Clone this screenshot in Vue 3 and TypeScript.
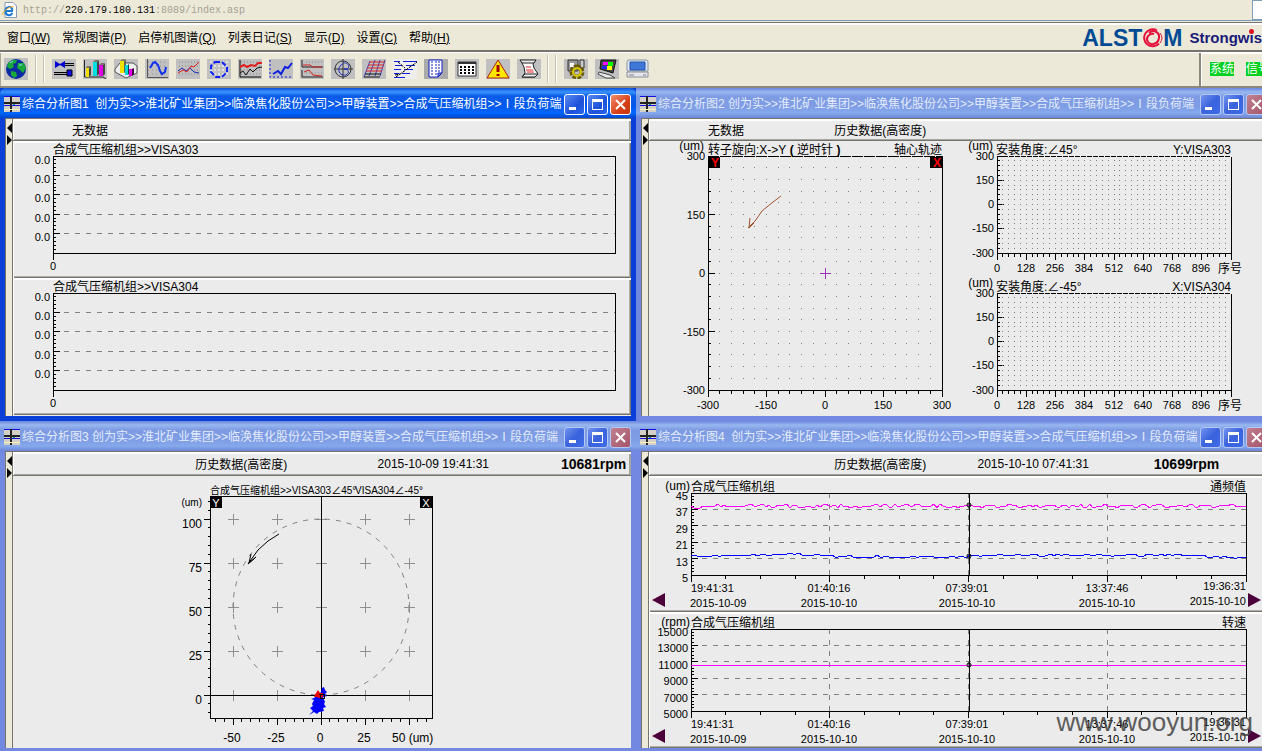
<script setup lang="ts">
interface Shape { d: string; s?: string; f?: string; w?: number; dash?: string }
interface Tool { name: string; bg: string; shapes: Shape[] }
interface Win { title: string; active: boolean; cls: string; head: string[]; speed: string }

const root = '创为实>>淮北矿业集团>>临涣焦化股份公司>>甲醇装置>>合成气压缩机组>>Ⅰ段负荷端'
const wins: Win[] = [
  { title: '综合分析图1\u00a0 ' + root, active: true, cls: 'upper', head: ['无数据', '', ''], speed: '' },
  { title: '综合分析图2 ' + root, active: false, cls: 'upper', head: ['无数据', '历史数据(高密度)', ''], speed: '' },
  { title: '综合分析图3 ' + root, active: false, cls: 'lower wide', head: ['', '历史数据(高密度)', '2015-10-09 19:41:31'], speed: '10681rpm' },
  { title: '综合分析图4\u00a0 ' + root, active: false, cls: 'lower', head: ['', '历史数据(高密度)', '2015-10-10 07:41:31'], speed: '10699rpm' },
]
const menus = [
  ['窗口', 'W'], ['常规图谱', 'P'], ['启停机图谱', 'Q'], ['列表日记', 'S'],
  ['显示', 'D'], ['设置', 'C'], ['帮助', 'H'],
]

const G = '#c0c0c0'
const dots = 'M3 3H23M3 7H23M3 11H23M3 15H23'
const tools: Tool[] = [
  { name: '联轴', bg: G, shapes: [
    { d: 'M13 5.5H22M2 14.5H15', s: '#000', w: 3 }, { d: 'M13 5.5H22M2 14.5H15', s: '#aaa', w: 1 },
    { d: 'M3 2L8 5 13 2V9L8 6 3 9Z', f: '#0000d0' }, { d: 'M15 11H20V17H15Z', f: '#1010e0', s: '#000' }] },
  { name: '棒图', bg: G, shapes: [
    { d: 'M1.500 1V18H20L23 20', s: '#222', w: 1 },
    { d: 'M6 9L8 7V16L6 18M14 3L16 1V15L14 17M20 6L22 4V15L20 17', f: '#444' },
    { d: 'M3 9H6V18H3Z', f: '#f0e000' }, { d: 'M10 3H14V17H10Z', f: '#00e0e0' },
    { d: 'M16 6H20V17H16Z', f: '#e000e0' }, { d: 'M3 9L4 7H8L6 9ZM10 3L12 1H16L14 3ZM16 6L18 4H22L20 6Z', f: '#776' }] },
  { name: '三维棒图', bg: G, shapes: [
    { d: 'M1 10L6 4H19L23 7V14L12 19 1 13Z', f: '#eee', s: '#555' },
    { d: 'M6 2H10V14H6Z', f: '#f0e000' }, { d: 'M10 2L12 0V13L10 14Z', f: '#665' }, { d: 'M11 6H14V16H11Z', f: '#00d8d8' },
    { d: 'M14 6L15 5V15L14 16Z', f: '#044' }, { d: 'M15 10H18V17H15Z', f: '#e000e0' }, { d: 'M18 10L20 9V15L18 17Z', f: '#404' }, { d: 'M6 2L8 0H12L10 2Z', f: '#886' }] },
  { name: '波形', bg: G, shapes: [
    { d: dots, s: '#8a8a8a', dash: '1 3' }, { d: 'M2.500 0V18.500H23', s: '#555' },
    { d: 'M5 9L8 4 10 3 13 6 15 12 17 15 20 13 21 8', s: '#1030f0', w: 2 }] },
  { name: '频谱', bg: G, shapes: [
    { d: dots, s: '#888', dash: '1 2' }, { d: 'M2 12L6 9 10 12 14 9 18 13 23 14', s: '#2030b0', w: 1 },
    { d: 'M2 14L7 11 11 13 15 7 18 8 23 3', s: '#e02020', w: 1 }] },
  { name: '轨迹', bg: G, shapes: [
    { d: dots, s: '#fff', dash: '2 2' }, { d: 'M8 3H15L20 8V13L15 18H9L4 13V7Z', s: '#1020ff', w: 2, dash: '5 2' }] },
  { name: '趋势', bg: G, shapes: [
    { d: 'M2 1V18H23', s: '#000' }, { d: dots, s: '#888', dash: '1 2' }, { d: 'M2 8L6 6 9 8 13 6 17 7 20 4 24 4', s: '#e02020', w: 2 },
    { d: 'M2 14L5 12 8 16 12 10 15 13 19 9 24 8', s: '#111', w: 1 }] },
  { name: '多值趋势', bg: G, shapes: [
    { d: 'M1 1V18H23', s: '#1020e0', dash: '2 2' }, { d: 'M4 15L9 12 12 15 16 8 19 9 23 4', s: '#1020e0', w: 2 }] },
  { name: '波德', bg: G, shapes: [
    { d: 'M2 1V8H23M2 11V18H23', s: '#222' }, { d: 'M6 3H22M6 14H22', s: '#888', dash: '1 2' },
    { d: 'M3 6H10L13 8 22 8M4 13L9 11 13 16 22 17', s: '#d02020' }] },
  { name: '极坐标', bg: G, shapes: [
    { d: 'M12 2A8 8 0 1 1 11.900 2M12 0V20M3 10H22', s: '#333' },
    { d: 'M12 4C19 3 20 11 13 10M12 16C6 15 7 6 12 5M13 10C20 10 18 17 12 16', s: '#2030c0' }] },
  { name: '瀑布', bg: G, shapes: [
    { d: 'M8 2L2 18M13 1L7 17M18 1L13 17M23 1L18 17', s: '#3040c0' },
    { d: 'M7 3H23M6 6H22M5 9H21M4 12H20', s: '#e02020', w: 1 }, { d: 'M3 15H19M2 18H18', s: '#111' }] },
  { name: '级联', bg: '#eeeeee', shapes: [
    { d: 'M1 2.500H7M10 2.500H24M2 6.500H9M13 6.500H22M1 10.500H8M11 10.500H20M1 14.500H6M9 14.500H17M1 18.500H12', s: '#1020d0', w: 1 },
    { d: 'M3 18L24 3M5 3L12 9M2 16L7 15', s: '#000', dash: '3 1' }] },
  { name: '报表', bg: '#aaaaaa', shapes: [
    { d: 'M5 1H18V14L14 18H5Z', f: '#fff', s: '#1020c0' }, { d: 'M8 2V17M12 2V17M15 2V14', s: '#1020c0', dash: '2 1' },
    { d: 'M14 18V14H18Z', f: '#88f', s: '#1020c0' }] },
  { name: '表格', bg: G, shapes: [
    { d: 'M3 3H21V17H3Z', f: '#fff', s: '#333' }, { d: 'M3 4H21', s: '#333', w: 2 },
    { d: 'M5 8H20M5 11H20M5 14H20', s: '#000', w: 2, dash: '2 2' }] },
  { name: '报警', bg: G, shapes: [
    { d: 'M12 1L23 19H1Z', f: '#ffe800', s: '#b02010', w: 1 }, { d: 'M12 6V13M12 15V17', s: '#a00000', w: 3 }] },
  { name: '记录', bg: G, shapes: [
    { d: 'M4 2H18L16 5 17 9 21 15 18 18H5L8 14 7 8Z', f: '#fff', s: '#222', w: 1 }, { d: 'M3 1H19L17 4H5ZM5 18L8 15H21L18 18Z', f: '#eee', s: '#222' },
    { d: 'M9 8H14M9 11H16M10 13H17', s: '#e02020' }] },
]
const tools2: Tool[] = [
  { name: '机组设置', bg: G, shapes: [
    { d: 'M4 1H14V12H4Z', f: '#999', s: '#333' }, { d: 'M6 4H10V8H6Z', f: '#fff' },
    { d: 'M16 1H20V9H16Z', f: '#ccc', s: '#333' },
    { d: 'M13 8A5 5 0 1 1 12.900 8', s: '#6a5a00', w: 5, dash: '3 1' }, { d: 'M13 9A4 4 0 1 1 12.900 9', s: '#d8c800', w: 2 }] },
  { name: '显示设置', bg: G, shapes: [
    { d: 'M6 1H21L18 14 5 10Z', f: '#444', s: '#111' }, { d: 'M8 3H13V6H8Z', f: '#f0f' }, { d: 'M13 3H18V7H13Z', f: '#0f0' },
    { d: 'M7 7H12V10H7Z', f: '#22f' }, { d: 'M12 7H17V11H12Z', f: '#ff0' }, { d: 'M4 13L15 16 20 19H11L3 15Z', f: '#eee', s: '#444' }] },
  { name: '终端', bg: 'transparent', shapes: [
    { d: 'M3 1H20Q22 1 22 3V12H1V3Q1 1 3 1Z', f: '#dfe8f4', s: '#8a94a4' }, { d: 'M4 3H19V11H4Z', f: '#3f78d8', s: '#2450a8' },
    { d: 'M1 13H22V18H1Z', f: '#e4e6ea', s: '#8a8e96' }, { d: 'M3 16H8M17 16H20', s: '#7c8088' }] },
]

const range = (n: number): number[] => Array.from({ length: n }, (_, i) => i)

/* Tick marks along one axis: every `sub`-th one is long. */
function ticksY(x: number, top: number, step: number, count: number, sub: number, dir = 1, first = 0): string {
  return range(count).map(i => {
    const y = Math.floor(top + i * step)
    return `M${x} ${y}.5h${dir * ((i - first) % sub === 0 ? 7 : 3)}`
  }).join('')
}
function ticksX(y: number, left: number, step: number, count: number, sub: number, first = 0): string {
  return range(count).map(i => {
    const x = Math.floor(left + i * step)
    return `M${x}.5 ${y}v${(i - first) % sub === 0 ? 7 : 4}`
  }).join('')
}
function dotGrid(x: number, y: number, dx: number, dy: number, nx: number, ny: number): string {
  let d = ''
  for (let j = 1; j < ny; j++) for (let i = 1; i < nx; i++) d += `M${Math.floor(x + i * dx)} ${Math.floor(y + j * dy)}.5h1`
  return d
}
function trace(points: number[][], amp: number, seed: number): string {
  let v = seed
  let out = ''
  for (let x = 691; x <= 1246; x += 3) {
    const k = Math.max(1, points.findIndex(p => p[0] >= x))
    const [x0, y0] = points[k - 1]
    const [x1, y1] = points[k]
    v = (v * 1103 + 12345) % 65521
    const y = y0 + ((x - x0) / (x1 - x0)) * (y1 - y0) + ((v % 100) / 100 - 0.5) * amp
    out += `${x},${Math.round(y)} `
  }
  return out
}
const magenta = trace([[691, 506], [1246, 506]], 4, 77)
const blue = trace([[691, 556], [795, 554], [840, 556], [950, 557], [990, 555], [1180, 555], [1246, 558]], 2, 31)

const orbitDots = dotGrid(708, 156, 11.7, 11.7, 20, 20)
const waveDots = dotGrid(997, 156, 5.85, 4.85, 40, 20)
const waves = [
  { top: 156, angle: '安装角度:∠45°', ch: 'Y:VISA303' },
  { top: 293, angle: '安装角度:∠-45°', ch: 'X:VISA304' },
]
const spectra = [{ top: 156, box: '13 141 618 137', ch: 'VISA303' }, { top: 293, box: '13 278 618 137', ch: 'VISA304' }]
const trends = [
  { top: 493, box: '649 476 618 136', unit: '(um)', kind: '通频值', y: ['45', '37', '29', '21', '13', '5'] },
  { top: 629, box: '649 612 618 136', unit: '(rpm)', kind: '转速', y: ['15000', '13000', '11000', '9000', '7000', '5000'] },
]
const times = [
  { x: 829, t: '01:40:16' }, { x: 967, t: '07:39:01' }, { x: 1107, t: '13:37:46' },
]
const crosses = [233, 277, 321, 365, 409].flatMap(x => [519, 563, 607, 651, 695].map(y => `M${x - 5} ${y}.5h11M${x}.5 ${y - 5}v11`)).join('')
</script>

<template>
  <div class="page">
    <header class="address">
      <svg class="ie" viewBox="0 0 16 16" aria-hidden="true">
        <path d="M3 .5H11L14.500 4V15.500H3Z" fill="#fff" stroke="#8899b4" />
        <path d="M11 9H3.500C3 5 9 3 10.500 8M10.500 11C8 15 3 13 3.500 9" fill="none" stroke="#1d78d8" stroke-width="2" />
        <path d="M1 13C-1 10 9 3 12 5" fill="none" stroke="#f0b020" stroke-width="1" />
      </svg>
      <span class="url">http://<b>220.179.180.131</b>:8089/index.asp</span>
      <span class="go"></span>
    </header>

    <nav class="menubar">
      <button v-for="m in menus" :key="m[1]" type="button" class="menu">{{ m[0] }}<u>({{ m[1] }})</u></button>
      <div class="brand">
        <span class="alstom">ALST<svg viewBox="0 0 21 20" aria-hidden="true">
          <path d="M15 2.500A8.500 8.500 0 1 0 17 15.500" fill="none" stroke="#e4103a" stroke-width="2" />
          <path d="M7 5C11 1 18 4 17 10S9 18 6 14 7 5 12 6" fill="none" stroke="#e4103a" stroke-width="2" />
          <path d="M18 5Q22 10 18 15" fill="none" stroke="#e4103a" stroke-width="1" />
        </svg>M</span>
        <span class="strong">Strongwis<i></i></span>
      </div>
    </nav>

    <div class="toolbar">
      <div class="tools">
        <button type="button" class="tool globe" aria-label="总貌">
          <svg viewBox="0 0 24 22">
            <rect width="24" height="22" fill="#c0c0c0" />
            <circle cx="12" cy="11" r="10" fill="#0a2ca0" />
            <path d="M4 5Q8 1 13 2L12 5 9 6 10 9 6 11 3 9ZM14 5L20 5 22 10 19 15 16 12 13 10ZM7 13L12 14 13 18 10 20 7 17Z" fill="#18a83c" />
            <path d="M6 5L9 3M15 7L18 7" stroke="#8fe0f0" />
          </svg>
        </button>
        <i class="sep"></i><i class="sep second"></i>
        <button v-for="t in tools" :key="t.name" type="button" class="tool" :aria-label="t.name">
          <svg viewBox="0 0 24 20">
            <rect width="24" height="20" :fill="t.bg" />
            <path v-for="(p, i) in t.shapes" :key="i" :d="p.d" :fill="p.f ?? 'none'" :stroke="p.s" :stroke-width="p.w ?? 1" :stroke-dasharray="p.dash" />
          </svg>
        </button>
        <i class="sep third"></i><i class="sep second"></i>
        <button v-for="t in tools2" :key="t.name" type="button" class="tool" :aria-label="t.name">
          <svg viewBox="0 0 24 20">
            <rect width="24" height="20" :fill="t.bg" />
            <path v-for="(p, i) in t.shapes" :key="i" :d="p.d" :fill="p.f ?? 'none'" :stroke="p.s" :stroke-width="p.w ?? 1" :stroke-dasharray="p.dash" />
          </svg>
        </button>
      </div>
      <div class="status"><span>系统</span><span>信号</span></div>
    </div>

    <main class="desk">
      <section v-for="(w, n) in wins" :key="n" class="win" :class="[w.cls, { active: w.active }]">
        <div class="titlebar">
          <svg class="wicon" viewBox="0 0 16 16" aria-hidden="true">
            <rect width="16" height="16" fill="#d4d0c8" />
            <path d="M0 .5H16M0 9.500H16" stroke="#1010e0" />
            <path d="M0 7H16M7 0V16" stroke="#222" stroke-width="2" />
            <path d="M0 13.500H16" stroke="#f4f0c0" />
            <path d="M9 8.500H11" stroke="#00a0a0" />
          </svg>
          <h2>{{ w.title }}</h2>
          <button type="button" class="cap" aria-label="最小化"><svg viewBox="0 0 19 19"><path d="M4 13.500H11" stroke-width="3" /></svg></button>
          <button type="button" class="cap" aria-label="最大化"><svg viewBox="0 0 19 19"><path d="M4.500 6V14.500H14.500V6" /><path d="M4 5.500H15" stroke-width="3" /></svg></button>
          <button type="button" class="cap close" aria-label="关闭"><svg viewBox="0 0 19 19"><path class="x" d="M5 5L14 14M14 5L5 14" stroke-width="2" /></svg></button>
        </div>
        <div class="body">
          <div class="strip">
            <svg viewBox="0 0 6 24" aria-hidden="true"><path d="M6 1V11L1 6ZM1 13V23L6 18Z" /></svg>
          </div>
          <div class="pane">
            <div class="head">
              <span v-for="(h, i) in w.head" :key="i">{{ h }}</span>
              <strong>{{ w.speed }}</strong>
            </div>

            <template v-if="n === 0">
              <div v-for="s in spectra" :key="s.ch" class="panel">
                <svg :viewBox="s.box">
                  <text x="53" :y="s.top - 2" class="t12">合成气压缩机组&gt;&gt;{{ s.ch }}</text>
                  <path :d="`M53.5 ${s.top + 104}V${s.top + .5}H615.5V${s.top + 97.5}H53`" class="ink" />
                  <path :d="ticksY(53, s.top, 3.88, 25, 5)" class="ink" />
                  <g v-for="i in [0, 1, 2, 3, 4]" :key="i">
                    <path v-if="i" :d="`M64 ${Math.floor(s.top + i * 19.4) + .5}H615`" class="dash" />
                    <text x="50" :y="Math.floor(s.top + i * 19.4) + 8" class="t11 end">0.0</text>
                  </g>
                  <text x="53" :y="s.top + 114" class="t11 mid">0</text>
                </svg>
              </div>
            </template>

            <svg v-else-if="n === 1" viewBox="649 141 618 275">
              <text x="704" y="150" class="t12 end">(um)</text>
              <text x="708" y="154" class="t12">转子旋向:X-&gt;Y<tspan font-weight="bold"> ( </tspan>逆时针<tspan font-weight="bold"> )</tspan></text>
              <text x="942" y="154" class="t12 end">轴心轨迹</text>
              <path d="M708.500 156V390.500H942.500V156" class="ink" />
              <path d="M708 156.500H942" class="ink" stroke-dasharray="11 1" />
              <path :d="ticksY(708, 156, 11.7, 21, 5)" class="ink" />
              <path :d="ticksX(390, 708, 11.7, 21, 5)" class="ink" />
              <path :d="orbitDots" class="dot" />
              <rect x="708" y="157" width="12" height="11" />
              <rect x="930" y="157" width="12" height="11" />
              <text x="715" y="167" class="t12 mid red">Y</text>
              <text x="937" y="167" class="t12 mid red">X</text>
              <path d="M781 196L773 202 762 211 755 221 748 228 754 223M750 218L749 228 754 223" class="arrow brown" />
              <path d="M820 273.500H831M825.500 268V279" class="purple" />
              <g v-for="(v, i) in ['300', '150', '0', '-150', '-300']" :key="v">
                <text x="705" :y="160 + Math.round(i * 58.5)" class="t11 end">{{ v }}</text>
                <text :x="942 - Math.round(i * 58.5)" y="409" class="t11 mid">{{ v }}</text>
              </g>
              <g v-for="c in waves" :key="c.ch">
                <text x="993" :y="c.top - 6" class="t12 end">(um)</text>
                <text x="996" :y="c.top - 2" class="t12">{{ c.angle }}</text>
                <text x="1231" :y="c.top - 2" class="t12 end">{{ c.ch }}</text>
                <path :d="`M997.5 ${c.top}v97.5h234v-97`" class="ink" />
                <path :d="`M997 ${c.top + .5}h234`" class="ink" stroke-dasharray="5 1" />
                <path :d="ticksY(997, c.top, 4.85, 21, 5)" class="ink" />
                <path :d="ticksX(c.top + 97, 997, 5.85, 41, 5)" class="ink" />
                <path :d="waveDots" class="dot" :transform="`translate(0 ${c.top - 156})`" />
                <text v-for="(v, i) in ['300', '150', '0', '-150', '-300']" :key="v" x="994" :y="c.top + 4 + Math.floor(i * 24.25)" class="t11 end">{{ v }}</text>
                <text v-for="i in range(8)" :key="i" :x="997 + Math.floor(i * 29.25)" :y="c.top + 116" class="t11 mid">{{ i * 128 }}</text>
                <text x="1218" :y="c.top + 117" class="t12">序号</text>
              </g>
            </svg>

            <svg v-else-if="n === 2" viewBox="13 476 618 272">
              <text x="210" y="494" class="t10">合成气压缩机组&gt;&gt;VISA303∠45°</text>
              <text x="423" y="494" class="t10 end">VISA304∠-45°</text>
              <text x="202" y="506" class="t10 end">(um)</text>
              <path :d="crosses" class="cross" />
              <circle cx="321" cy="607" r="88" class="ring" />
              <path d="M210.500 496.500H432.500V718.500H210.500ZM321.500 496V718M210 695.500H432" class="ink" />
              <path :d="ticksY(211, 501.400, 8.8, 25, 5, -1, 2)" class="ink" />
              <path :d="ticksX(718, 215.400, 8.8, 25, 5, 2)" class="ink" />
              <rect x="210" y="497" width="12" height="11" />
              <rect x="420" y="497" width="12" height="11" />
              <text x="216" y="507" class="t11 mid white">Y</text>
              <text x="426" y="507" class="t11 mid white">X</text>
              <path d="M279 534L268 541 258 550 248 564 256 557M251 554L249 563 256 557" class="arrow" />
              <path d="M322 688L324 687 325 690 327 692 325 694 327 696 323 697 325 702 324 704 326 707 323 708 324 711 319 712 317 714 314 712 309 715 313 711 310 708 313 706 312 704 314 700 311 699 314 698 318 695 321 692Z" fill="#0000ff" />
              <path d="M318 690L320 693 323 693 323 697 319 698 317 697 314 697 316 693Z" fill="#f00000" />
              <path d="M318.500 694.500h1M320 694h4v4h-4z" class="ink" />
              <text v-for="(v, i) in ['100', '75', '50', '25', '0']" :key="v" x="202" :y="528 + i * 44" class="t12 end">{{ v }}</text>
              <text v-for="(v, i) in ['-50', '-25', '0', '25']" :key="v" :x="232 + i * 44" y="742" class="t12 mid">{{ v }}</text>
              <text x="392" y="742" class="t12">50 (um)</text>
            </svg>

            <template v-else>
              <div v-for="(c, k) in trends" :key="c.kind" class="panel">
                <svg :viewBox="c.box">
                  <text x="690" :y="c.top - 3" class="t12 end">{{ c.unit }}</text>
                  <text x="691" :y="c.top - 2" class="t12">合成气压缩机组</text>
                  <text x="1246" :y="c.top - 2" class="t12 end">{{ c.kind }}</text>
                  <path v-for="i in [1, 2, 3, 4]" :key="i" :d="`M702 ${Math.floor(c.top + i * 16.4) + .5}H1246`" class="dash" />
                  <path :d="`M829.5 ${c.top}v82M968.5 ${c.top}v82M1107.5 ${c.top}v82`" class="dash" />
                  <path :d="`M691.500 ${c.top + .5}H1246.500v82H691.500Z`" class="ink" />
                  <path :d="ticksY(691, c.top, 3.28, 26, 5)" class="ink" />
                  <path :d="ticksX(c.top + 82, 691, 34.69, 17, 4)" class="ink" />
                  <text v-for="(v, i) in c.y" :key="v" x="688" :y="c.top + 7 + Math.round(i * 16.4)" class="t11 end">{{ v }}</text>
                  <template v-if="k === 0">
                    <polyline :points="magenta" class="line mag" />
                    <polyline :points="blue" class="line blu" />
                    <circle cx="969" cy="505" r="2" class="mark" /><circle cx="969" cy="556" r="2" class="mark" />
                  </template>
                  <template v-else>
                    <path d="M691 665.500H1246" class="line mag" />
                    <circle cx="969" cy="665" r="2" class="mark" />
                  </template>
                  <path :d="`M969.500 ${c.top}v82`" class="ink" />
                  <text x="691" :y="c.top + 99" class="t11">19:41:31</text>
                  <text x="690" :y="c.top + 114" class="t11">2015-10-09</text>
                  <g v-for="t in times" :key="t.t">
                    <text :x="t.x" :y="c.top + 99" class="t11 mid">{{ t.t }}</text>
                    <text :x="t.x" :y="c.top + 114" class="t11 mid">2015-10-10</text>
                  </g>
                  <text x="1246" :y="c.top + 97" class="t11 end">19:36:31</text>
                  <text x="1246" :y="c.top + 112" class="t11 end">2015-10-10</text>
                  <path :d="`M665 ${c.top + 100}v14l-13 -7zM1248 ${c.top + 100}v14l13 -7z`" fill="#4b003c" />
                </svg>
              </div>
            </template>
          </div>
        </div>
      </section>
    </main>
    <div class="watermark">www.wooyun.org</div>
  </div>
</template>

<style>
body { margin: 0; }
</style>

<style scoped>
.page {
  position: relative;
  height: 100vh;
  overflow: hidden;
  display: flex;
  flex-direction: column;
  background: #ece9d8;
  color: #000;
  font: 12px "Liberation Sans", "Noto Sans CJK SC", sans-serif;
}
.page * { box-sizing: border-box; }
button { margin: 0; padding: 0; border: 0; background: none; font: inherit; color: inherit; flex: none; }
svg { display: block; }

.address {
  flex: none;
  display: flex;
  align-items: center;
  gap: 5px;
  height: 23px;
  padding: 0 0 2px 2px;
  border-bottom: 1px solid #76746c;
  box-shadow: inset 0 -1px #ece9d8, inset 0 -2px #7f9db9;
}
.ie { width: 16px; height: 16px; }
.url { font: 10px "Liberation Mono", monospace; color: #a5a294; }
.url b { font-weight: normal; color: #000; }
.go { margin-left: auto; width: 10px; height: 20px; border: 1px solid #7f9db9; border-right: 0; background: #fff; }

.menubar {
  flex: none;
  display: flex;
  align-items: center;
  gap: 12px;
  height: 29px;
  padding-left: 7px;
  border-top: 2px solid #fff;
  border-bottom: 2px solid #76746c;
  overflow: hidden;
  white-space: nowrap;
}
.menu { line-height: 18px; }
.brand { margin-left: auto; display: flex; align-items: center; gap: 7px; font-weight: bold; }
.alstom { display: flex; align-items: center; font-size: 23px; line-height: 24px; color: #004a94; }
.alstom svg { width: 21px; height: 20px; }
.strong { position: relative; font-size: 15px; color: #1a1a78; }
.strong i { position: absolute; right: 8px; top: 0; width: 5px; height: 5px; border-radius: 50%; background: #e01020; }

.toolbar {
  flex: none;
  display: flex;
  height: 36px;
  border-top: 1px solid #fff;
  border-bottom: 2px solid #8a887c;
}
.tools {
  flex: 1;
  display: flex;
  align-items: center;
  gap: 7px;
  padding: 0 0 1px 3px;
  border-left: 1px solid #aca899;
}
.tool svg { width: 24px; height: 20px; }
.globe svg { height: 22px; }
.sep { width: 1px; height: 28px; background: #c5c2b2; box-shadow: 1px 0 #fff; }
.second { margin-right: 1px; }
.third { margin-left: -1px; }
.status {
  flex: none;
  display: flex;
  align-items: center;
  gap: 12px;
  width: 63px;
  padding: 0 0 2px 9px;
  border-left: 2px solid #8a887c;
  box-shadow: inset 1px 1px #fff;
  overflow: hidden;
}
.status span { flex: none; background: #00d020; color: #fff; line-height: 14px; }

.desk {
  flex: none;
  display: grid;
  grid-template-columns: repeat(2, calc(50% + 5px));
  grid-template-rows: 333px auto;
}
.win {
  display: flex;
  flex-direction: column;
  border: solid #7388e0;
  border-width: 0 5px 5px;
  background: #ebebeb;
  min-width: 0;
}
.win.active { border-color: #0a3fd8; }
.titlebar {
  flex: none;
  display: flex;
  align-items: center;
  gap: 2px;
  height: 30px;
  margin: 0 -5px;
  padding: 2px 5px 0 4px;
  background: linear-gradient(#6c86e0, #98b8f0 4px, #7d9ae2 9px, #7f9ee6 20px, #86a9ec 25px, #6d84d8);
  color: #e2ebfa;
}
.active .titlebar {
  background: linear-gradient(#0a4fd8, #3a94ff 4px, #0a5be8 8px, #0358ea 18px, #0066ff 25px, #0046c8);
  color: #fff;
  border-radius: 6px 6px 0 0;
}
.wicon { flex: none; width: 16px; height: 16px; }
h2 { flex: 1; min-width: 0; margin: 0; font-size: 12px; font-weight: normal; line-height: 18px; white-space: nowrap; }
.cap {
  width: 21px;
  height: 21px;
  border: 1px solid #b4c8f4;
  border-radius: 3px;
  background: linear-gradient(135deg, #7394f0, #3a62dc 50%, #3f6ce8);
}
.cap svg { width: 19px; height: 19px; stroke: #fff; fill: none; shape-rendering: crispEdges; }
.cap .x { shape-rendering: auto; }
.active .cap { border-color: #fff; background: linear-gradient(135deg, #5c8cf4, #1c50d8 60%, #2a68f0); }
.close { background: linear-gradient(135deg, #c08090, #a45468); }
.active .close { background: linear-gradient(135deg, #f09070, #d84018 60%, #c03810); }

.body { flex: 1; display: flex; }
.strip {
  flex: none;
  width: 8px;
  padding-top: 3px;
  background: #ece9d8;
  border: solid #76746c;
  border-width: 1px 1px 0;
}
.strip svg { width: 6px; height: 24px; }
.pane { flex: 1; min-width: 0; }
.pane svg { width: 100%; height: auto; overflow: visible; }
.head {
  display: grid;
  grid-template-columns: 126fr 143fr 176fr 113fr;
  align-items: center;
  height: 23px;
  padding-left: 59px;
  border-top: 1px solid #76746c;
  border-bottom: 1px solid #76746c;
  box-shadow: inset 1px 2px #fff, inset -2px -1px #a5a5a0;
  white-space: nowrap;
}
.lower .head { height: 25px; }
.wide .head { grid-template-columns: 182fr 182fr 183fr 70fr; padding-left: 0; }
.head strong { font-size: 14px; }
.panel { box-shadow: inset 1px 1px #fff, inset 0 2px #fff, inset -1px -1px #76746c, inset -2px -2px #b0aea6; }

text { font-family: "Liberation Sans", "Noto Sans CJK SC", sans-serif; fill: #000; }
.t10 { font-size: 10px; }
.t11 { font-size: 11px; }
.t12 { font-size: 12px; }
.end { text-anchor: end; }
.mid { text-anchor: middle; }
.red { fill: #f00; font-weight: bold; }
.white { fill: #fff; }
.ink, .dash, .dot, .cross, .purple { fill: none; stroke: #000; shape-rendering: crispEdges; }
.dash { stroke: #808080; stroke-dasharray: 5 6; }
.dot { stroke: #808080; }
.cross { stroke: #909090; }
.purple { stroke: #a030b8; }
.ring { fill: none; stroke: #808080; stroke-dasharray: 5 6; }
.arrow { fill: none; stroke: #000; }
.brown { stroke: #a0522d; }
.line { fill: none; shape-rendering: crispEdges; }
.mag { stroke: #f0f; }
.blu { stroke: #00f; }
.mark { fill: none; stroke: #000; }

.watermark {
  position: absolute;
  right: 9px;
  bottom: 14px;
  font-size: 26px;
  line-height: 30px;
  color: #444;
  opacity: .85;
}
</style>
